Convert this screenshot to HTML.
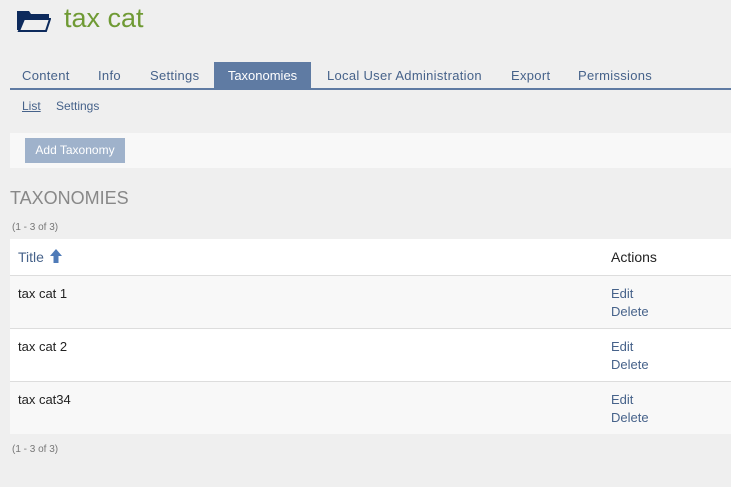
<!DOCTYPE html>
<html><head><style>
body{margin:0;width:731px;height:487px;background:#efefef;font-family:"Liberation Sans",sans-serif;font-size:13px;color:#222;position:relative;overflow:hidden}
.a{position:absolute;white-space:nowrap}
.tab{position:absolute;top:62px;height:27px;line-height:28px;color:#46628a;font-size:13px;letter-spacing:0.3px}
</style></head><body>
<svg class="a" style="left:16px;top:10px" width="35" height="22" viewBox="0 0 35 22"><path d="M1 1h12l2 3h18v4H8L4 20H1z" fill="#0d2a5c"/><path d="M8 9h26l-4 12H3z" fill="none" stroke="#0d2a5c" stroke-width="2"/></svg>
<div class="a" style="left:64px;top:3px;font-size:27px;color:#6f9a34">tax cat</div>
<div class="a" style="left:10px;top:88px;width:721px;height:2px;background:#5f7ba3"></div>
<div class="tab" style="left:22px">Content</div>
<div class="tab" style="left:98px">Info</div>
<div class="tab" style="left:150px">Settings</div>
<div class="tab" style="left:214px;width:97px;background:#5f7ba3;color:#fff;text-align:center;letter-spacing:0">Taxonomies</div>
<div class="tab" style="left:327px">Local User Administration</div>
<div class="tab" style="left:511px">Export</div>
<div class="tab" style="left:578px">Permissions</div>
<div class="a" style="left:22px;top:99px;font-size:12px;color:#46628a;text-decoration:underline">List</div>
<div class="a" style="left:56px;top:99px;font-size:12px;color:#46628a">Settings</div>
<div class="a" style="left:10px;top:133px;width:721px;height:35px;background:#f8f8f8"></div>
<div class="a" style="left:25px;top:138px;width:100px;height:25px;background:#9fb2cb;color:#fff;font-size:12px;line-height:25px;text-align:center">Add Taxonomy</div>
<div class="a" style="left:10px;top:188px;font-size:18px;color:#888">TAXONOMIES</div>
<div class="a" style="left:12px;top:222px;font-size:10px;color:#777">(1 - 3 of 3)</div>
<div class="a" style="left:10px;top:239px;width:721px;height:36px;background:#fff;border-bottom:1px solid #ddd"></div>
<div class="a" style="left:18px;top:249px;color:#46628a;font-size:14px">Title</div>
<svg class="a" style="left:50px;top:249px" width="12" height="14" viewBox="0 0 12 14"><path d="M6 0L12 7H8.5V14H3.5V7H0z" fill="#4f7bb8"/></svg>
<div class="a" style="left:611px;top:249px;font-size:14px">Actions</div>
<div class="a" style="left:10px;top:276px;width:721px;height:52px;background:#f8f8f8;border-bottom:1px solid #ddd"></div>
<div class="a" style="left:10px;top:329px;width:721px;height:52px;background:#fff;border-bottom:1px solid #ddd"></div>
<div class="a" style="left:10px;top:382px;width:721px;height:52px;background:#f8f8f8"></div>
<div class="a" style="left:18px;top:286px">tax cat 1</div>
<div class="a" style="left:18px;top:339px">tax cat 2</div>
<div class="a" style="left:18px;top:392px">tax cat34</div>
<div class="a" style="left:611px;top:285px;color:#46628a;line-height:18px">Edit<br>Delete</div>
<div class="a" style="left:611px;top:338px;color:#46628a;line-height:18px">Edit<br>Delete</div>
<div class="a" style="left:611px;top:391px;color:#46628a;line-height:18px">Edit<br>Delete</div>
<div class="a" style="left:12px;top:444px;font-size:10px;color:#777">(1 - 3 of 3)</div>
</body></html>
